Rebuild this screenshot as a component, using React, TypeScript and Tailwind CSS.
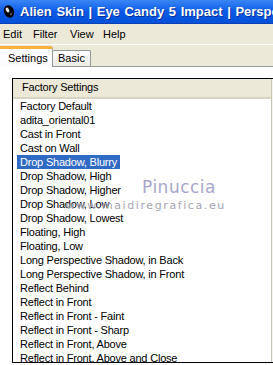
import React from "react";

const presets = [
  "Factory Default",
  "adita_oriental01",
  "Cast in Front",
  "Cast on Wall",
  "Drop Shadow, Blurry",
  "Drop Shadow, High",
  "Drop Shadow, Higher",
  "Drop Shadow, Low",
  "Drop Shadow, Lowest",
  "Floating, High",
  "Floating, Low",
  "Long Perspective Shadow, in Back",
  "Long Perspective Shadow, in Front",
  "Reflect Behind",
  "Reflect in Front",
  "Reflect in Front - Faint",
  "Reflect in Front - Sharp",
  "Reflect in Front, Above",
  "Reflect in Front, Above and Close",
];

const menus = [
  { label: "Edit", w: "w-[30px]" },
  { label: "Filter", w: "w-[37px]" },
  { label: "View", w: "w-[33px]" },
  { label: "Help", w: "w-[30px]" },
];

const AppIcon = () => (
  <svg width="12" height="15" viewBox="0 0 12 15" className="shrink-0">
    <ellipse cx="6" cy="7.5" rx="5" ry="6.5" fill="#000" transform="rotate(-20 6 7.5)" />
    <ellipse cx="4.5" cy="6" rx="1.6" ry="2.6" fill="#e8e8e8" transform="rotate(-30 4.5 6)" />
    <ellipse cx="8" cy="10" rx="1" ry="1.6" fill="#555" />
  </svg>
);

export default function App() {
  const selected = "Drop Shadow, Blurry";

  return (
    <div className="relative w-[273px] h-[365px] overflow-hidden bg-white flex flex-col font-['Liberation_Sans',Arial,sans-serif] text-black">
      {/* title bar */}
      <div className="h-[24px] shrink-0 flex items-center pl-[3px] gap-[5px] whitespace-nowrap bg-gradient-to-b from-[#3a86f6] via-[#0a5ae8] to-[#0551d8] border-b border-[#0a3fb8]">
        <AppIcon />
        <span className="text-white font-bold text-[13px] [word-spacing:1px] [text-shadow:1px_1px_0_#0b2f9c]">
          Alien Skin | Eye Candy 5 Impact | Perspective Shadow
        </span>
      </div>

      {/* menu bar */}
      <div className="h-[20px] shrink-0 flex items-center pl-[3px] bg-[#ece9d8] text-[11px]">
        {menus.map((m) => (
          <span key={m.label} className={m.w}>
            {m.label}
          </span>
        ))}
      </div>
      <div className="h-px shrink-0 bg-white" />

      {/* tabs */}
      <div className="h-[22px] shrink-0 flex items-end bg-[#ece9d8] border-b border-[#919b9c] text-[11px]">
        <div className="relative z-10 -mb-px h-[21px] w-[53px] flex items-center pl-[8px] bg-[#fcfcfe] border-r border-[#919b9c] border-t-[3px] border-t-[#f7b13a] rounded-tr-[3px]">
          Settings
        </div>
        <div className="h-[16px] w-[38px] flex items-center pl-[5px] bg-gradient-to-b from-white to-[#ecebe4] border-t border-r border-[#919b9c] rounded-t-[2px]">
          Basic
        </div>
      </div>

      {/* panel */}
      <div className="flex-1 bg-white pt-[11px] pl-[12px]">
        <div className="flex w-[280px] h-[285px] border-l border-t border-b border-black overflow-hidden">
          <div className="w-[258px] shrink-0 flex flex-col">
            <div className="h-[20px] shrink-0 flex items-center pl-[9px] pb-[2px] bg-[#ece9d8] border-b-2 border-[#d8d4c4] text-[11px] tracking-[-0.2px]">
              Factory Settings
            </div>
            <div className="flex flex-col">
              {presets.map((p) => (
                <div key={p} className="h-[14px] shrink-0 pl-[4px] whitespace-nowrap text-[11px] leading-[14px] tracking-[-0.2px]">
                  <span
                    className={`inline-block px-[3px] ${
                      p === selected ? "bg-[#316ac5] text-white" : ""
                    }`}
                  >
                    {p}
                  </span>
                </div>
              ))}
            </div>
          </div>
          <div className="flex-1 bg-[#f5f4ef] border-l border-[#c9c5b6]" />
        </div>
      </div>

      {/* watermark */}
      <div className="absolute left-[142px] top-[176px] text-[17px] leading-[22px] text-[#a9a7cc] font-['DejaVu_Sans',sans-serif] tracking-[0.5px] pointer-events-none">
        Pinuccia
      </div>
      <div className="absolute left-[66px] top-[199px] text-[11px] leading-[14px] text-[#a6a6b2] font-['DejaVu_Sans',sans-serif] tracking-[1.6px] pointer-events-none">
        www.maidiregrafica.eu
      </div>
    </div>
  );
}
